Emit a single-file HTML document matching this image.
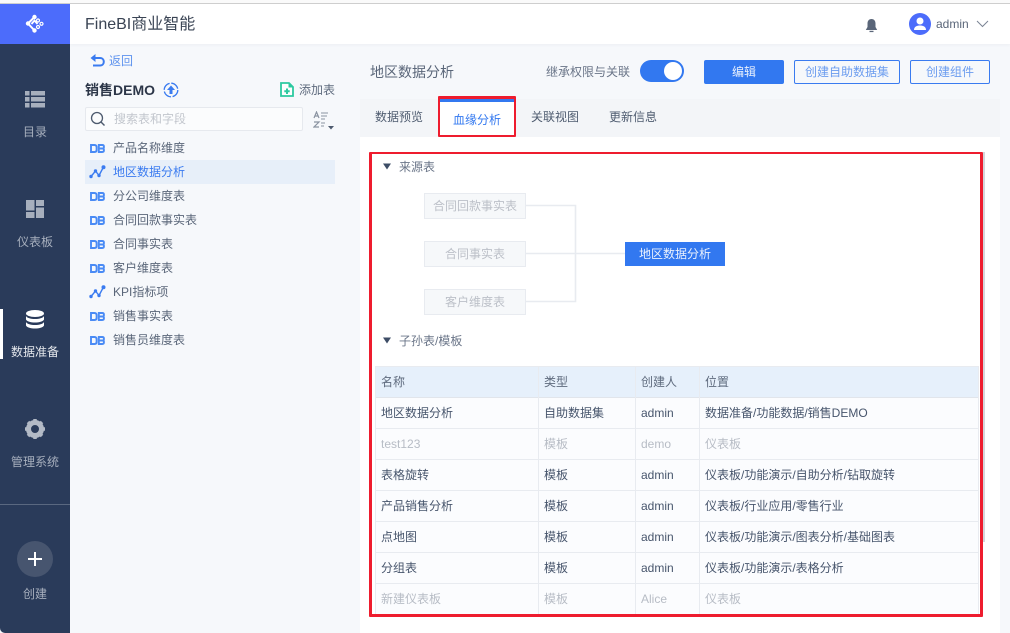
<!DOCTYPE html>
<html lang="zh">
<head>
<meta charset="utf-8">
<title>FineBI商业智能</title>
<style>
*{box-sizing:border-box;margin:0;padding:0}
html,body{width:1010px;height:633px;overflow:hidden;background:#f6f8fb}
body{position:relative;font-family:"Liberation Sans","Noto Sans CJK SC",sans-serif;font-size:12px;color:#3d4d66}
.a{position:absolute;white-space:nowrap}
.c{text-align:center}
svg{position:absolute;display:block}
.nav{left:0;width:70px;text-align:center;color:#a7afbd;font-size:12px;line-height:16px}
.item{left:113px;line-height:16px;color:#5a6679}
.cell{line-height:16px;color:#47556c}
.g{color:#b7bcc5}
.src{left:424px;width:102px;height:26px;background:#f6f8fa;border:1px solid #e8ebf0;color:#bcc0c8;text-align:center;line-height:24px}
</style>
</head>
<body>
<div class="a" style="left:0;top:0;width:1010px;height:3px;background:#fafafa"></div>
<div class="a" style="left:0;top:3px;width:1010px;height:1px;background:#cfcfcf"></div>
<div class="a" style="left:70px;top:4px;width:940px;height:40px;background:#fff;box-shadow:0 1px 3px rgba(60,70,90,.05)"></div>
<div class="a" style="left:0;top:4px;width:70px;height:40px;background:#4c6cfb"></div>
<svg style="left:25px;top:14px" width="20" height="20" viewBox="0 0 20 20"><path d="M9.500 3L3 9.500L9.500 16.500" fill="none" stroke="#fff" stroke-width="2"/><path d="M6.500 10L9.500 6.500L12.500 10" fill="none" stroke="#fff" stroke-width="1.800"/><circle cx="9.500" cy="3" r="2.200" fill="#fff"/><circle cx="3" cy="9.500" r="2.200" fill="#fff"/><circle cx="9.500" cy="16.500" r="2.200" fill="#fff"/><circle cx="13" cy="6.500" r="1.500" fill="none" stroke="#fff" stroke-width="1.200"/><circle cx="16.500" cy="9.800" r="1.500" fill="none" stroke="#fff" stroke-width="1.200"/><circle cx="13" cy="13" r="1.500" fill="none" stroke="#fff" stroke-width="1.200"/></svg>
<div class="a" style="left:85px;top:14px;font-size:16px;line-height:22px;color:#3a4454">FineBI商业智能</div>
<svg style="left:865px;top:18px" width="13" height="15" viewBox="0 0 13 15"><path d="M6.500 1C3.800 1 2.500 3 2.500 5.500V9L0.800 12H12.200L10.500 9V5.500C10.500 3 9.200 1 6.500 1Z" fill="#5a6679"/><rect x="4.500" y="12.800" width="4" height="1.300" fill="#5a6679"/></svg>
<svg style="left:909px;top:13px" width="22" height="22" viewBox="0 0 22 22"><circle cx="11" cy="11" r="11" fill="#4c6cfb"/><circle cx="11" cy="8" r="3.500" fill="#fff"/><path d="M5 17C5 13.500 8 12.500 11 12.500C14 12.500 17 13.500 17 17Z" fill="#fff"/></svg>
<div class="a" style="left:936px;top:16px;line-height:16px;color:#5a6679">admin</div>
<svg style="left:976px;top:20px" width="13" height="8" viewBox="0 0 13 8"><path d="M1 1L6.500 6.500L12 1" fill="none" stroke="#7b8494" stroke-width="1"/></svg>

<div class="a" style="left:0;top:44px;width:70px;height:589px;background:#2a3b5a;border-bottom-left-radius:5px"></div>
<div class="a" style="left:0;top:504px;width:70px;height:1px;background:#5a6880"></div>
<svg style="left:25px;top:91px" width="20" height="17" viewBox="0 0 20 17" fill="#a7afbd"><rect x="0" y="0" width="4.500" height="4.500"/><rect x="6" y="0" width="14" height="4.500"/><rect x="0" y="6" width="4.500" height="4.500"/><rect x="6" y="6" width="14" height="4.500"/><rect x="0" y="12" width="4.500" height="4.500"/><rect x="6" y="12" width="14" height="4.500"/></svg>
<div class="a nav" style="top:124px">目录</div>
<svg style="left:26px;top:200px" width="18" height="18" viewBox="0 0 18 18" fill="#a7afbd"><rect x="0" y="0" width="8.500" height="10.500"/><rect x="10" y="0" width="8" height="6"/><rect x="0" y="12" width="8.500" height="6"/><rect x="10" y="7.500" width="8" height="10.500"/></svg>
<div class="a nav" style="top:234px">仪表板</div>
<div class="a" style="left:0;top:309px;width:3px;height:50px;background:#fff"></div>
<svg style="left:26px;top:310px" width="18" height="19" viewBox="0 0 18 19" fill="#fff"><ellipse cx="9" cy="3.500" rx="9" ry="3.500"/><path d="M0 6C1 8 5 9 9 9S17 8 18 6V9.500C17 11.500 13 12.500 9 12.500S1 11.500 0 9.500Z"/><path d="M0 12C1 14 5 15 9 15S17 14 18 12V15.500C17 17.500 13 18.500 9 18.500S1 17.500 0 15.500Z"/></svg>
<div class="a nav" style="top:344px;color:#e4e7ec">数据准备</div>
<svg style="left:25px;top:419px" width="20" height="20" viewBox="0 0 20 20"><circle cx="10" cy="10" r="6.500" fill="none" stroke="#b3bac6" stroke-width="5"/><g stroke="#b3bac6" stroke-width="3.500"><path d="M10 0V3"/><path d="M10 17V20"/><path d="M0 10H3"/><path d="M17 10H20"/><path d="M3 3L5 5"/><path d="M15 15L17 17"/><path d="M3 17L5 15"/><path d="M15 5L17 3"/></g></svg>
<div class="a nav" style="top:454px">管理系统</div>
<div class="a" style="left:17px;top:541px;width:36px;height:36px;border-radius:50%;background:#47556f"></div>
<div class="a" style="left:28px;top:558px;width:14px;height:2px;background:#fff"></div>
<div class="a" style="left:34px;top:552px;width:2px;height:14px;background:#fff"></div>
<div class="a nav" style="top:586px">创建</div>

<svg style="left:90px;top:54px" width="15" height="13" viewBox="0 0 15 13"><path d="M2 4H10C12.500 4 13.800 5.800 13.800 7.700S12.500 11.500 10 11.500H3" fill="none" stroke="#3a7bf0" stroke-width="2"/><path d="M0.500 4L5.500 0V8Z" fill="#3a7bf0"/></svg>
<div class="a" style="left:109px;top:53px;line-height:16px;color:#5e93ee">返回</div>
<div class="a" style="left:85px;top:81px;font-size:14px;line-height:18px;font-weight:bold;color:#2c3648">销售DEMO</div>
<svg style="left:163px;top:82px" width="16" height="16" viewBox="0 0 16 16"><circle cx="8" cy="8" r="6.800" fill="none" stroke="#3a7bf0" stroke-width="1.300" stroke-dasharray="9 1.700"/><path d="M8 3.500L12 8H9.500V12H6.500V8H4Z" fill="#3a7bf0"/></svg>
<svg style="left:280px;top:82px" width="14" height="15" viewBox="0 0 14 15"><path d="M1 1H9L13 5V14H1Z" fill="#fdfefe" stroke="#2cc9a0" stroke-width="1.800"/><path d="M8.500 1V5.500H13" fill="#2cc9a0"/><path d="M7 6.500V12M4.300 9.200H9.700" stroke="#2cc9a0" stroke-width="2"/></svg>
<div class="a" style="left:299px;top:82px;line-height:16px;color:#5f6b7e">添加表</div>
<div class="a" style="left:85px;top:107px;width:218px;height:24px;background:#fbfcfd;border:1px solid #e6e9ee;border-radius:2px"></div>
<svg style="left:90px;top:111px" width="16" height="16" viewBox="0 0 16 16"><circle cx="7" cy="7" r="5.500" fill="none" stroke="#4d5a6e" stroke-width="1.300"/><path d="M11 11L14.500 14.500" stroke="#4d5a6e" stroke-width="1.400"/></svg>
<div class="a" style="left:114px;top:111px;line-height:16px;color:#c2c6cd">搜索表和字段</div>
<svg style="left:313px;top:111px" width="21" height="20" viewBox="0 0 21 20"><path d="M1 7L3.500 1L6 7M1.800 5H5.200M1 11H6L1 16H6" fill="none" stroke="#8a93a1" stroke-width="1.200"/><path d="M8 2H15M8 5H14M8 8H12M8 12H12M8 15H11" stroke="#a0a7b3" stroke-width="1.200"/><path d="M15 15H21L18 18.500Z" fill="#4d5a6e"/></svg>

<div class="a" style="left:85px;top:160px;width:250px;height:24px;background:#e7eff9"></div>
<svg width="0" height="0" style="left:0;top:0"><defs>
<g id="db" fill="none" stroke="#4a8bf5" stroke-width="1.900"><path d="M1 1H4.500C6 1 6.600 1.800 6.600 3V6C6.600 7.200 6 8 4.500 8H1Z"/><path d="M8.800 1H12.200C13.300 1 13.900 1.500 13.900 2.500V3.300C13.900 4 13.300 4.500 12.500 4.500C13.300 4.500 13.900 5 13.900 5.800V6.500C13.900 7.500 13.300 8 12.200 8H8.800ZM8.800 4.500H12.500"/></g>
<g id="kpi"><path d="M2 11.500L6.500 6L10 10.500L14.500 2" fill="none" stroke="#3a7bf0" stroke-width="1.400"/><circle cx="2" cy="11.500" r="1.700" fill="#3a7bf0"/><circle cx="6.500" cy="6" r="1.700" fill="#3a7bf0"/><circle cx="10" cy="10.500" r="1.700" fill="#3a7bf0"/><circle cx="14.500" cy="2.200" r="2" fill="#3a7bf0"/></g>
</defs></svg>
<svg style="left:90px;top:144px" width="15" height="9" viewBox="0 0 15 9"><use href="#db"/></svg>
<svg style="left:89px;top:165px" width="17" height="14" viewBox="0 0 17 14"><use href="#kpi"/></svg>
<svg style="left:90px;top:192px" width="15" height="9" viewBox="0 0 15 9"><use href="#db"/></svg>
<svg style="left:90px;top:216px" width="15" height="9" viewBox="0 0 15 9"><use href="#db"/></svg>
<svg style="left:90px;top:240px" width="15" height="9" viewBox="0 0 15 9"><use href="#db"/></svg>
<svg style="left:90px;top:264px" width="15" height="9" viewBox="0 0 15 9"><use href="#db"/></svg>
<svg style="left:89px;top:285px" width="17" height="14" viewBox="0 0 17 14"><use href="#kpi"/></svg>
<svg style="left:90px;top:312px" width="15" height="9" viewBox="0 0 15 9"><use href="#db"/></svg>
<svg style="left:90px;top:336px" width="15" height="9" viewBox="0 0 15 9"><use href="#db"/></svg>
<div class="a item" style="top:140px">产品名称维度</div>
<div class="a item" style="top:164px;color:#3a7bf0">地区数据分析</div>
<div class="a item" style="top:188px">分公司维度表</div>
<div class="a item" style="top:212px">合同回款事实表</div>
<div class="a item" style="top:236px">合同事实表</div>
<div class="a item" style="top:260px">客户维度表</div>
<div class="a item" style="top:284px">KPI指标项</div>
<div class="a item" style="top:308px">销售事实表</div>
<div class="a item" style="top:332px">销售员维度表</div>

<div class="a" style="left:370px;top:63px;font-size:14px;line-height:18px;color:#5a6679">地区数据分析</div>
<div class="a" style="left:546px;top:64px;line-height:16px;color:#6a7588">继承权限与关联</div>
<div class="a" style="left:640px;top:60px;width:44px;height:22px;border-radius:11px;background:#3278f0"></div>
<div class="a" style="left:664px;top:62px;width:18px;height:18px;border-radius:50%;background:#fff"></div>
<div class="a c" style="left:704px;top:60px;width:80px;height:24px;line-height:24px;background:#3278f0;border-radius:2px;color:#e8f0fd">编辑</div>
<div class="a c" style="left:794px;top:60px;width:106px;height:24px;line-height:22px;border:1px solid #3a7bf0;border-radius:2px;color:#6b9cef">创建自助数据集</div>
<div class="a c" style="left:910px;top:60px;width:80px;height:24px;line-height:22px;border:1px solid #3a7bf0;border-radius:2px;color:#6b9cef">创建组件</div>

<div class="a" style="left:360px;top:99px;width:640px;height:38px;background:#f3f5f8"></div>
<div class="a" style="left:360px;top:137px;width:640px;height:496px;background:#fff"></div>
<div class="a" style="left:375px;top:109px;line-height:16px;color:#4f5c70">数据预览</div>
<div class="a" style="left:440px;top:99px;width:75px;height:38px;background:#fff;border-top:3px solid #3278f0"></div>
<div class="a" style="left:453px;top:112px;line-height:16px;color:#3278f0">血缘分析</div>
<div class="a" style="left:531px;top:109px;line-height:16px;color:#4f5c70">关联视图</div>
<div class="a" style="left:609px;top:109px;line-height:16px;color:#4f5c70">更新信息</div>

<svg style="left:382px;top:163px" width="10" height="7" viewBox="0 0 10 7"><path d="M1 0.500H9L5 6.500Z" fill="#3d4d66"/></svg>
<div class="a" style="left:399px;top:159px;line-height:16px;color:#6a7588">来源表</div>
<div class="a src" style="top:193px">合同回款事实表</div>
<div class="a src" style="top:241px">合同事实表</div>
<div class="a src" style="top:289px">客户维度表</div>
<svg style="left:526px;top:200px" width="100" height="110" viewBox="0 0 100 110"><path d="M0 5.500H49.500V101.500H0M0 53.500H99" fill="none" stroke="#e8ebf0" stroke-width="1.600"/></svg>
<div class="a c" style="left:625px;top:242px;width:100px;height:24px;line-height:24px;background:#3278f0;color:#eaf1fd">地区数据分析</div>
<svg style="left:382px;top:337px" width="10" height="7" viewBox="0 0 10 7"><path d="M1 0.500H9L5 6.500Z" fill="#3d4d66"/></svg>
<div class="a" style="left:399px;top:333px;line-height:16px;color:#6a7588">子孙表/模板</div>

<div class="a" style="left:375px;top:366px;width:604px;height:31px;background:#e6f0fb"></div>
<div class="a" style="left:375px;top:397px;width:604px;height:218px;background:#fbfcfe"></div>
<div class="a" style="left:375px;top:366px;width:604px;height:1px;background:#e8ebf0"></div>
<div class="a" style="left:375px;top:397px;width:604px;height:1px;background:#e1e5eb"></div>
<div class="a" style="left:375px;top:428px;width:604px;height:1px;background:#e8ebf0"></div>
<div class="a" style="left:375px;top:459px;width:604px;height:1px;background:#e8ebf0"></div>
<div class="a" style="left:375px;top:490px;width:604px;height:1px;background:#e8ebf0"></div>
<div class="a" style="left:375px;top:521px;width:604px;height:1px;background:#e8ebf0"></div>
<div class="a" style="left:375px;top:552px;width:604px;height:1px;background:#e8ebf0"></div>
<div class="a" style="left:375px;top:583px;width:604px;height:1px;background:#e8ebf0"></div>
<div class="a" style="left:375px;top:366px;width:1px;height:249px;background:#e8ebf0"></div>
<div class="a" style="left:538px;top:366px;width:1px;height:249px;background:#e8ebf0"></div>
<div class="a" style="left:635px;top:366px;width:1px;height:249px;background:#e8ebf0"></div>
<div class="a" style="left:699px;top:366px;width:1px;height:249px;background:#e8ebf0"></div>
<div class="a" style="left:978px;top:366px;width:1px;height:249px;background:#e8ebf0"></div>

<div class="a cell" style="left:381px;top:374px;color:#5f6b7e">名称</div><div class="a cell" style="left:544px;top:374px;color:#5f6b7e">类型</div><div class="a cell" style="left:641px;top:374px;color:#5f6b7e">创建人</div><div class="a cell" style="left:705px;top:374px;color:#5f6b7e">位置</div>
<div class="a cell" style="left:381px;top:405px">地区数据分析</div><div class="a cell" style="left:544px;top:405px">自助数据集</div><div class="a cell" style="left:641px;top:405px">admin</div><div class="a cell" style="left:705px;top:405px">数据准备/功能数据/销售DEMO</div>
<div class="a cell g" style="left:381px;top:436px">test123</div><div class="a cell g" style="left:544px;top:436px">模板</div><div class="a cell g" style="left:641px;top:436px">demo</div><div class="a cell g" style="left:705px;top:436px">仪表板</div>
<div class="a cell" style="left:381px;top:467px">表格旋转</div><div class="a cell" style="left:544px;top:467px">模板</div><div class="a cell" style="left:641px;top:467px">admin</div><div class="a cell" style="left:705px;top:467px">仪表板/功能演示/自助分析/钻取旋转</div>
<div class="a cell" style="left:381px;top:498px">产品销售分析</div><div class="a cell" style="left:544px;top:498px">模板</div><div class="a cell" style="left:641px;top:498px">admin</div><div class="a cell" style="left:705px;top:498px">仪表板/行业应用/零售行业</div>
<div class="a cell" style="left:381px;top:529px">点地图</div><div class="a cell" style="left:544px;top:529px">模板</div><div class="a cell" style="left:641px;top:529px">admin</div><div class="a cell" style="left:705px;top:529px">仪表板/功能演示/图表分析/基础图表</div>
<div class="a cell" style="left:381px;top:560px">分组表</div><div class="a cell" style="left:544px;top:560px">模板</div><div class="a cell" style="left:641px;top:560px">admin</div><div class="a cell" style="left:705px;top:560px">仪表板/功能演示/表格分析</div>
<div class="a cell g" style="left:381px;top:591px">新建仪表板</div><div class="a cell g" style="left:544px;top:591px">模板</div><div class="a cell g" style="left:641px;top:591px">Alice</div><div class="a cell g" style="left:705px;top:591px">仪表板</div>

<div class="a" style="left:983px;top:152px;width:2px;height:390px;background:#d4d6da"></div>
<div class="a" style="left:438px;top:96px;width:78px;height:41px;border:solid #ee1c2e;border-width:3px 2px 2px 2px;border-radius:1px"></div>
<div class="a" style="left:369px;top:152px;width:614px;height:465px;border:solid #ee1c2e;border-width:2px 3px 3px 3px;border-radius:1px"></div>
</body>
</html>
